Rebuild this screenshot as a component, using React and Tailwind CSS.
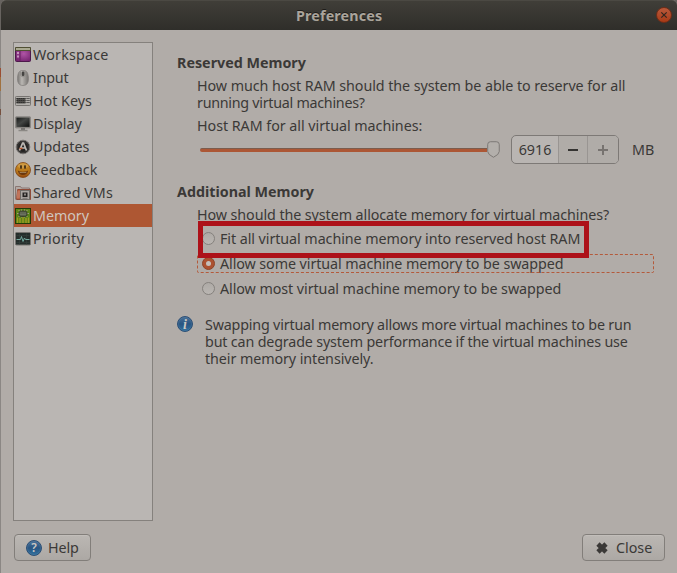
import React from 'react';

function WorkspaceIcon() {
  return (
    <svg width="16" height="16" viewBox="0 0 16 16">
      <defs>
        <radialGradient id="ws" cx=".55" cy=".4" r=".7">
          <stop offset="0" stopColor="#b055a6" />
          <stop offset="1" stopColor="#71206c" />
        </radialGradient>
      </defs>
      <rect x=".5" y="1.5" width="15" height="13" rx="1" fill="url(#ws)" stroke="#4d194b" />
      <rect x="0" y="0" width="16" height="4" rx=".8" fill="#504f33" />
      <rect x="1" y="1" width="14" height="2" fill="#aaa991" />
      <path d="M2 5h2v2H2zM2 8.500h2v2H2z" fill="#c493bd" />
      <path d="M5 4v10" stroke="#662062" />
    </svg>
  );
}

function MouseIcon() {
  return (
    <svg width="16" height="16" viewBox="0 0 16 16">
      <defs>
        <linearGradient id="ms" x1="0" x2="1">
          <stop offset="0" stopColor="#777471" />
          <stop offset=".4" stopColor="#bab7b3" />
          <stop offset="1" stopColor="#74716e" />
        </linearGradient>
      </defs>
      <path d="M8 .4C4 .4 3 3 2.6 7c-.5 5 1 8.5 5.4 8.5s5.900-3.500 5.400-8.500C13 3 12 .4 8 .4z" fill="url(#ms)" stroke="#85827f" strokeWidth=".8" />
      <path d="M5.500 1.500v4q2.500 3 5 0v-4" fill="none" stroke="#918e8a" />
      <rect x="6.700" y="1.500" width="2.700" height="4.500" rx="1.200" fill="#454442" />
    </svg>
  );
}

function KeyboardIcon() {
  return (
    <svg width="16" height="16" viewBox="0 0 16 16">
      <rect x=".5" y="3.500" width="15" height="9" rx=".8" fill="#b1aeaa" stroke="#777471" />
      <rect x="1.500" y="5" width="9" height="5.500" fill="#54524f" />
      <path d="M1.500 5.500h9M1.500 7.500h9M1.500 9.500h9" stroke="#2d2c2b" strokeWidth="1.200" strokeDasharray="1.400 .6" />
      <path d="M11.500 5.500h3M11.500 7.500h3M11.500 9.500h3" stroke="#3a3938" strokeWidth="1.200" strokeDasharray="1.200 .6" />
    </svg>
  );
}

function DisplayIcon() {
  return (
    <svg width="16" height="16" viewBox="0 0 16 16">
      <defs>
        <linearGradient id="dp" x1="0" y1="0" x2="1" y2="1">
          <stop offset="0" stopColor="#171918" />
          <stop offset=".45" stopColor="#444644" />
          <stop offset="1" stopColor="#0d0e0d" />
        </linearGradient>
      </defs>
      <rect x=".5" y=".7" width="15" height="11.300" rx=".7" fill="#8e8b87" stroke="#777471" strokeWidth=".6" />
      <rect x="1.400" y="1.600" width="13.200" height="9.300" fill="url(#dp)" />
      <path d="M6 12h4v2H6z" fill="#777471" />
      <path d="M3.500 14.500h9" stroke="#8b8884" strokeWidth="1.500" />
    </svg>
  );
}

function UpdatesIcon() {
  return (
    <svg width="16" height="16" viewBox="0 0 16 16">
      <circle cx="8" cy="8" r="6.800" fill="#252423" stroke="#777471" />
      <circle cx="8" cy="8" r="5.500" fill="none" stroke="#4a4846" strokeWidth=".7" />
      <path d="M4.500 11.500L7.600 4.200h1l2.900 7.300M6.500 9h4" fill="none" stroke="#bcb8b3" strokeWidth="1.700" />
      <path d="M4.500 9.500h3" stroke="#b8562e" strokeWidth="1.500" />
    </svg>
  );
}

function FeedbackIcon() {
  return (
    <svg width="16" height="16" viewBox="0 0 16 16">
      <defs>
        <linearGradient id="fb" x2="0" y2="1">
          <stop offset="0" stopColor="#c98b24" />
          <stop offset=".6" stopColor="#b8771a" />
          <stop offset="1" stopColor="#93470d" />
        </linearGradient>
      </defs>
      <circle cx="8" cy="8" r="7.500" fill="url(#fb)" stroke="#804514" strokeWidth=".8" />
      <ellipse cx="8" cy="3.800" rx="5.300" ry="2.600" fill="#d2a75b" opacity=".6" />
      <ellipse cx="6" cy="5" rx=".9" ry="1.900" fill="#352410" />
      <ellipse cx="10" cy="5" rx=".9" ry="1.900" fill="#352410" />
      <path d="M2.700 8.500Q8 11 13.300 8.500Q12 13 8 13T2.700 8.500z" fill="#6b370d" />
      <path d="M4 9.700q4 1.500 8 0-.8 1.300-4 1.300T4 9.700z" fill="#c9b78d" />
    </svg>
  );
}

function SharedIcon() {
  return (
    <svg width="16" height="16" viewBox="0 0 16 16">
      <path d="M.5 14.500V1.500h5l1 1.500h8v4" fill="#b2a9a4" stroke="#8a7772" />
      <path d="M1.500 14.500l1.200-10H15.500v10z" fill="#ad5436" stroke="#8e4b38" />
      <path d="M2.500 5.500h4l-2 8h-3z" fill="#c1755b" />
      <rect x="5.500" y="5.500" width="9" height="9" fill="#aaa6a2" stroke="#716d69" />
      <rect x="7.500" y="7.500" width="5" height="4.500" fill="#242322" />
      <rect x="9" y="8.500" width="2" height="2" fill="#8c8884" />
      <path d="M7.500 13.300h5" stroke="#777471" />
    </svg>
  );
}

function MemoryIcon() {
  return (
    <svg width="16" height="16" viewBox="0 0 16 16">
      <rect x=".5" y=".5" width="15" height="15" fill="#5b8417" stroke="#203d08" />
      <path d="M2.500 9.500v5.500M5 10v5M8 9v6M11 10v5M13.500 9.500v5.500" stroke="#a39b22" strokeWidth="1.300" />
      <path d="M3.500 2.500l2 1M6.500 1.500v8M9.500 1.500v8M12.500 2.500l-2 1M2 5.500h12M3.500 8.500l2-1M12.500 8.500l-2-1" stroke="#a09f80" />
      <rect x="4" y="3" width="8" height="5.500" rx="2" fill="#555d49" stroke="#303923" strokeWidth=".8" />
      <path d="M5.500 5h5M5.500 6.500h5" stroke="#929585" strokeWidth=".8" strokeDasharray="1 1" />
    </svg>
  );
}

function PriorityIcon() {
  return (
    <svg width="16" height="16" viewBox="0 0 16 16">
      <rect x=".5" y="1.500" width="15" height="12.500" rx="1" fill="#252e2c" stroke="#777471" />
      <path d="M1.500 4.500h13M1.500 11.500h13M4.500 2.500v11M11.500 2.500v11" stroke="#36413e" strokeWidth=".6" />
      <path d="M1.500 8.500h4l1-3 1.500 5 1.500-3.500 1 1.500h4" fill="none" stroke="#74aaa0" strokeWidth="1" />
    </svg>
  );
}

function BlueBadge({ glyph, id, italic }) {
  return (
    <svg width="16" height="16" viewBox="0 0 16 16" className="shrink-0">
      <defs>
        <linearGradient id={id} x2="0" y2="1">
          <stop offset="0" stopColor="#4a7198" />
          <stop offset=".5" stopColor="#295582" />
          <stop offset="1" stopColor="#32729f" />
        </linearGradient>
      </defs>
      <circle cx="8" cy="8" r="7.500" fill={`url(#${id})`} stroke="#274a70" strokeWidth=".9" />
      <circle cx="8" cy="8" r="6.500" fill="none" stroke="#6189ab" strokeWidth=".6" opacity=".5" />
      <text x="8" y={italic ? 12.6 : 12.3} textAnchor="middle" fill="#cbc7c2"
        className={italic ? "font-['Liberation_Serif',serif] text-[14px] font-bold italic" : "font-['Noto_Sans',sans-serif] text-[12px] font-semibold"}>
        {glyph}
      </text>
    </svg>
  );
}

const items = [
  ['Workspace', WorkspaceIcon, 'tracking-[0.2px]'],
  ['Input', MouseIcon, 'tracking-[-0.2px]'],
  ['Hot Keys', KeyboardIcon, 'tracking-[0px]'],
  ['Display', DisplayIcon, 'tracking-[0px]'],
  ['Updates', UpdatesIcon, 'tracking-[0.05px]'],
  ['Feedback', FeedbackIcon, 'tracking-[0.1px]'],
  ['Shared VMs', SharedIcon, 'tracking-[0.05px]'],
  ['Memory', MemoryIcon, 'tracking-[-0.05px]'],
  ['Priority', PriorityIcon, 'tracking-[0.25px]'],
];

function Radio({ checked }) {
  return checked ? (
    <span className="flex size-[13px] shrink-0 items-center justify-center rounded-full border border-[#8e4528] bg-[#ac5130]">
      <span className="size-[5px] rounded-full bg-[#c5bfba]" />
    </span>
  ) : (
    <span className="size-[13px] shrink-0 rounded-full border border-[#85817d] bg-linear-to-b from-[#aeaaa6] to-[#bab6b2]" />
  );
}

function Option({ children, checked, tracking }) {
  return (
    <label className="relative flex h-[25px] items-center pl-[5px]">
      {checked && <span className="absolute top-[3px] left-0 h-[19px] w-[457px] rounded-[2px] border border-dashed border-[#b45a3b]" />}
      <Radio checked={checked} />
      <span className={`ml-[5px] ${tracking}`}>{children}</span>
    </label>
  );
}

const button =
  'flex h-[27px] items-center rounded-[4px] border border-[#827e7a] bg-linear-to-b from-[#bbb7b3] to-[#aca8a4] shadow-[inset_0_1px_0_#c2beba]';

export default function App() {
  return (
    <div className="relative flex h-[573px] w-[677px] overflow-hidden bg-[#b1aca8] font-['Noto_Sans',sans-serif] text-[14.3px] leading-[17px] whitespace-nowrap text-[#3b3937]">
      <div className="flex w-px shrink-0 flex-col bg-[#8b8784]">
        <div className="mt-[68px] h-[9px] bg-[#9a4d32]" />
        <div className="h-[14px] bg-[#a0713f]" />
        <div className="mt-[18px] h-[6px] bg-[#76503f]" />
      </div>
      <div className="flex min-w-0 flex-1 flex-col">
        <header className="flex h-[30px] shrink-0 items-center rounded-t-[5px] border-t border-[#4b4943] bg-linear-to-b from-[#403e38] to-[#2f2e2a] pr-[5px] shadow-[0_-5px_0_5px_#67635f]">
          <h1 className="-mt-px ml-[295px] flex-1 text-[14.3px] font-bold tracking-[0.15px] text-[#aaa49b] [text-shadow:0_-1px_0_#1d1c19]">Preferences</h1>
          <span className="-mt-px flex size-4 items-center justify-center rounded-full border border-[#712d17] bg-linear-to-b from-[#b9593b] to-[#a83a14]">
            <svg width="8" height="8" viewBox="0 0 8 8"><path d="M1.300 1.300l5.400 5.400M6.700 1.300L1.300 6.700" stroke="#32261f" strokeWidth="1.200" /></svg>
          </span>
        </header>
        <div className="flex flex-1">
          <nav className="mt-3 ml-3 h-[479px] w-[140px] shrink-0 border border-[#85817d] bg-[#bab6b3]">
            {items.map(([name, Icon, tracking]) => (
              <div key={name} className={`flex h-[23px] items-center gap-[2px] pl-px ${name === 'Memory' ? 'bg-[#ae5733] text-[#d0c6bf]' : ''}`}>
                <Icon />
                <span className={tracking}>{name}</span>
              </div>
            ))}
          </nav>
          <main className="ml-6 flex-1 pt-6">
            <h2 className="font-bold tracking-[0px]">Reserved Memory</h2>
            <div className="mt-[6px] ml-5">
              <p className="tracking-[-0.065px]">How much host RAM should the system be able to reserve for all</p>
              <p className="tracking-[-0.27px]">running virtual machines?</p>
              <p className="mt-[6px] tracking-[-0.04px]">Host RAM for all virtual machines:</p>
            </div>
            <div className="mt-px ml-[23px] flex h-[29px] items-center">
              <div className="flex w-[300px] items-center">
                <span className="h-[4px] w-[288px] rounded-l-sm border-t border-[#7b5c4d] bg-[#ac5735]" />
                <svg width="13" height="17" viewBox="0 0 13 17">
                  <path d="M3.500.7h6q2.800 0 2.800 2.800v7q0 3-5.800 5.800Q.7 13.500.7 10.500v-7Q.7.700 3.500.7z" fill="#b3afab" stroke="#7c7875" />
                </svg>
              </div>
              <div className="ml-[11px] flex h-[29px] w-[108px] rounded-[5px] border border-[#7d7976] bg-[#b9b5b2]">
                <span className="flex w-[46px] items-center justify-center">6916</span>
                <span className="flex w-[29px] items-center justify-center border-l border-[#999592] bg-[#b0aca8]">
                  <span className="h-[2px] w-[10px] bg-[#353432]" />
                </span>
                <span className="flex flex-1 items-center justify-center rounded-r-[4px] border-l border-[#999592] bg-[#b0aca8]">
                  <svg width="10" height="10" viewBox="0 0 10 10"><path d="M0 5h10M5 0v10" stroke="#777370" strokeWidth="2" /></svg>
                </span>
              </div>
              <span className="ml-[13px]">MB</span>
            </div>
            <h2 className="mt-[19px] font-bold tracking-[0px]">Additional Memory</h2>
            <div className="mt-[6px] ml-5">
              <p className="mb-[3px] tracking-[-0.08px]">How should the system allocate memory for virtual machines?</p>
              <Option tracking="tracking-[-0.065px]">Fit all virtual machine memory into reserved host RAM</Option>
              <Option checked tracking="tracking-[-0.08px]">Allow some virtual machine memory to be swapped</Option>
              <Option tracking="tracking-[-0.065px]">Allow most virtual machine memory to be swapped</Option>
            </div>
            <div className="mt-[15px] flex gap-3">
              <BlueBadge id="info" glyph="i" italic />
              <div>
                <p className="tracking-[-0.18px]">Swapping virtual memory allows more virtual machines to be run</p>
                <p className="tracking-[-0.16px]">but can degrade system performance if the virtual machines use</p>
                <p className="tracking-[-0.08px]">their memory intensively.</p>
              </div>
            </div>
          </main>
        </div>
        <footer className="mb-3 flex h-[27px] shrink-0 justify-between pr-3 pl-[13px]">
          <button className={`${button} w-[77px] gap-[6px] pl-[11px]`}>
            <BlueBadge id="help" glyph="?" />
            <span className="tracking-[-0.1px]">Help</span>
          </button>
          <button className={`${button} w-[83px] gap-[7px] pl-3`}>
            <svg width="14" height="14" viewBox="0 0 14 14"><path d="M3 3l8 8M11 3l-8 8" stroke="#3b3937" strokeWidth="4.600" /></svg>
            <span>Close</span>
          </button>
        </footer>
      </div>
      <div className="absolute top-[221px] left-[198px] h-[37px] w-[391px] border-[5px] border-[#ad1119]" />
    </div>
  );
}
